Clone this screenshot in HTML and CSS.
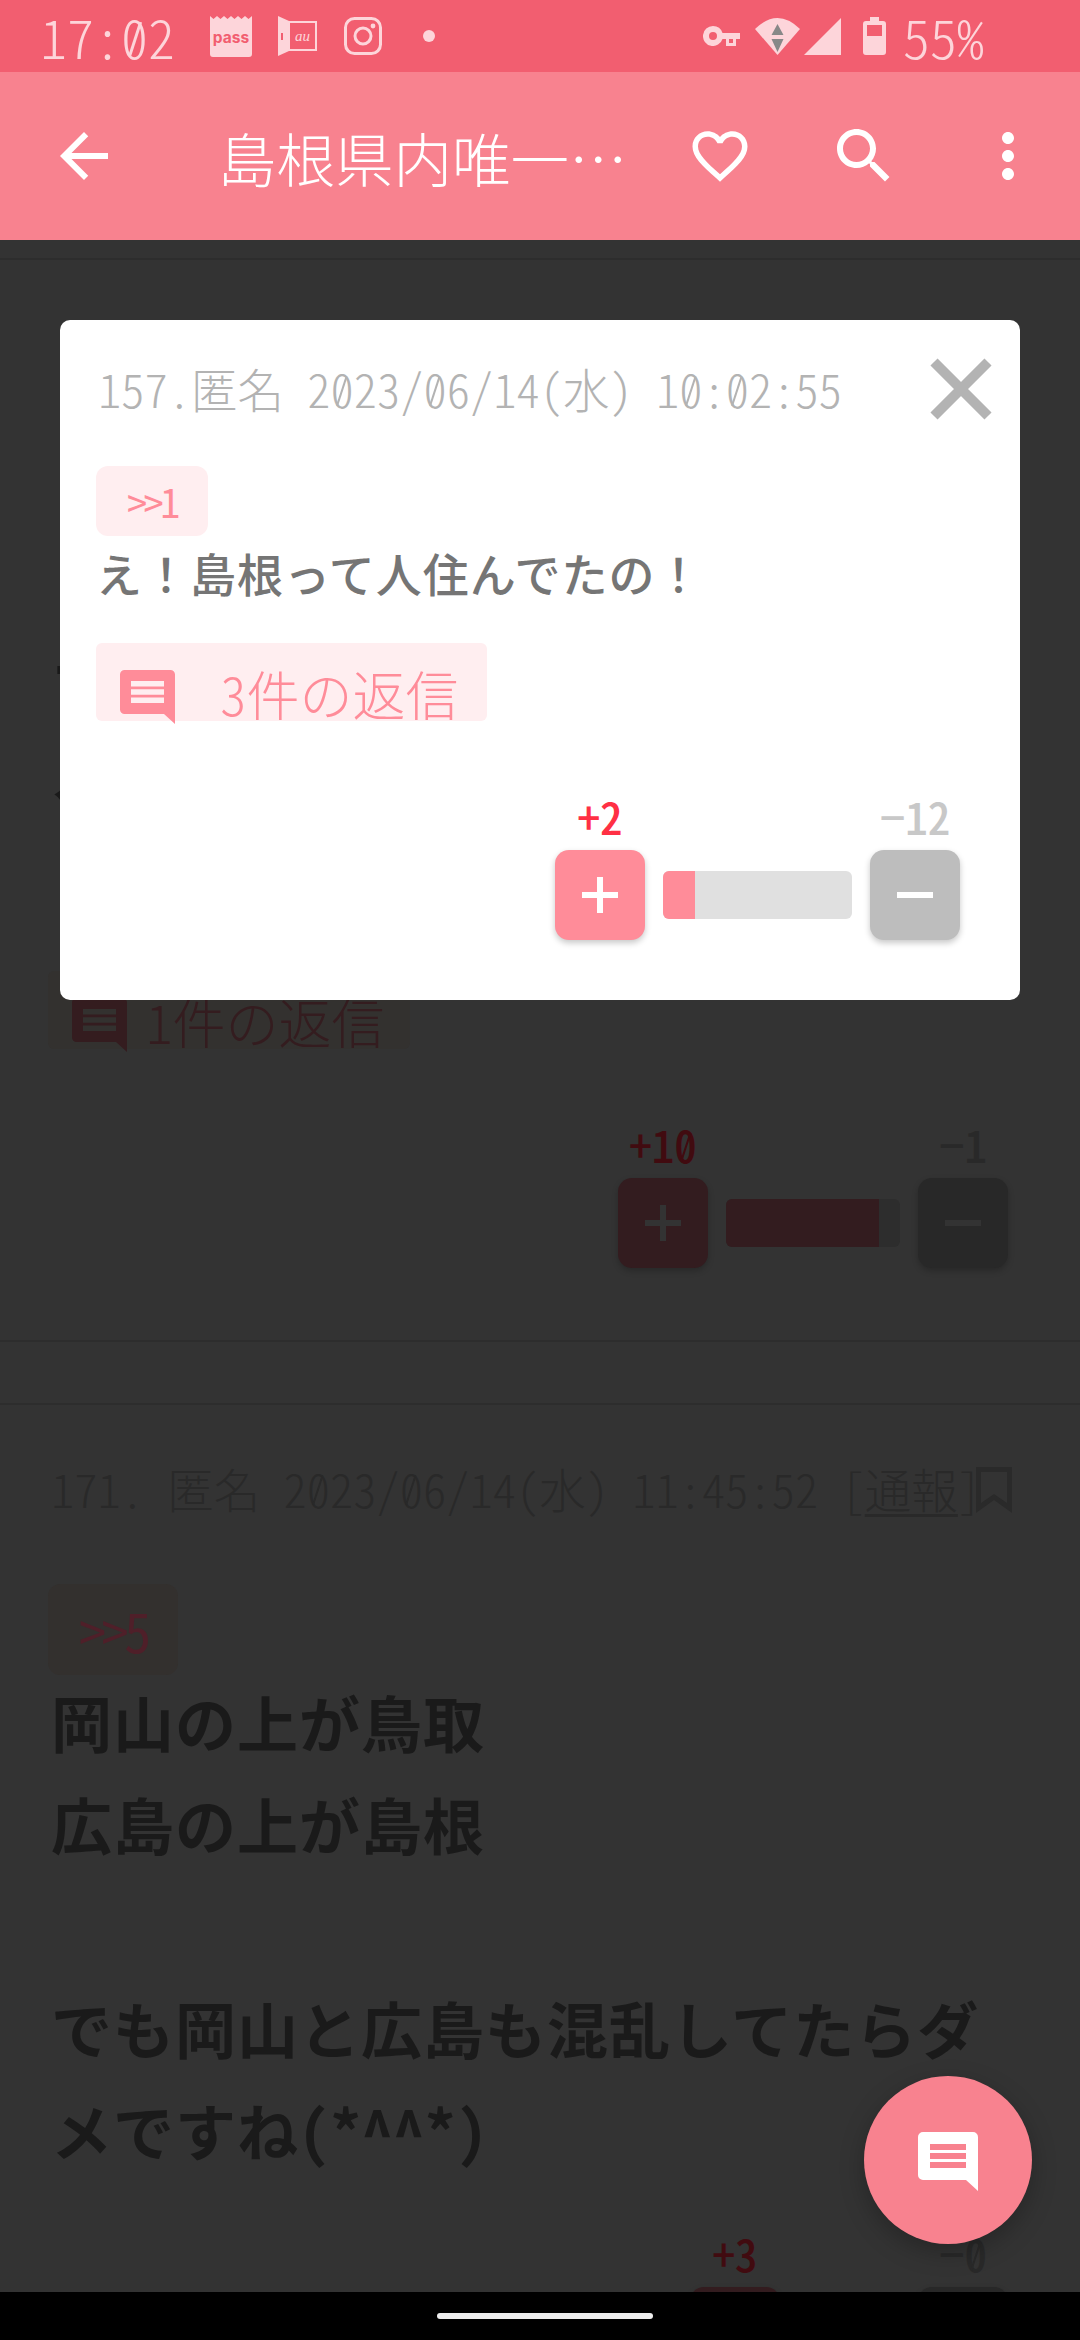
FILE: index.html
```html
<!DOCTYPE html>
<html lang="ja">
<head>
<meta charset="utf-8">
<title>島根県内唯一</title>
<link rel="stylesheet" href="styles.css">
</head>
<body>
<svg class="defs" width="0" height="0" aria-hidden="true">
  <symbol id="chat" viewBox="0 0 60 60">
    <path fill-rule="evenodd" d="M5 0H55a5 5 0 0 1 5 5V59L48 48H5a5 5 0 0 1-5-5V5a5 5 0 0 1 5-5ZM12 12v6H48v-6ZM12 21v6H48v-6ZM12 30v6H48v-6Z"/>
  </symbol>
  <symbol id="plus" viewBox="0 0 36 36"><path d="M15 0h6v15h15v6H21v15h-6V21H0v-6h15Z"/></symbol>
  <symbol id="minus" viewBox="0 0 36 36"><path d="M0 15h36v6H0Z"/></symbol>
</svg>
<div class="screen">
  <header class="status">
    <span class="time">17:<span class="z">0</span>2</span>
    <div class="st-left">
      <svg class="ic-pass" viewBox="0 0 42 41"><path d="M0 0l3.500 3L7 0l3.500 3L14 0l3.500 3L21 0l3.500 3L28 0l3.500 3L35 0l3.500 3L42 0V38a3 3 0 0 1-3 3H3a3 3 0 0 1-3-3Z"/><text x="21" y="27" text-anchor="middle">pass</text></svg>
      <svg class="ic-au" viewBox="0 0 39 40"><path class="solid" d="M0 0L11 5V35L0 40Z"/><rect class="out" x="11" y="6" width="27" height="28"/><rect class="cut" x="3" y="17" width="2" height="7"/><text x="24.500" y="25">au</text></svg>
      <svg class="ic-insta" viewBox="0 0 38 38"><rect x="1.500" y="1.500" width="35" height="35" rx="9"/><circle cx="19" cy="19" r="8"/><circle class="dot" cx="29" cy="9" r="2.400"/></svg>
      <span class="st-dot"></span>
    </div>
    <div class="st-right">
      <svg class="ic-key" viewBox="0 0 37 20"><path fill-rule="evenodd" d="M10 0a10 10 0 0 1 9.500 7H37V13H33V20H23V13H19.500A10 10 0 1 1 10 0ZM10 6a4 4 0 1 0 0 8a4 4 0 0 0 0-8Z"/><rect class="cut" x="26" y="13" width="4" height="4"/></svg>
      <svg class="ic-wifi" viewBox="0 0 45 37"><path d="M0 11Q22.500-11 45 11L22.500 37Z"/><path class="arrow" d="M22.500 6L28.500 17H16.500ZM16.500 21H28.500L22.500 34Z"/></svg>
      <svg class="ic-signal" viewBox="0 0 37 37"><path d="M37 0V37H0Z"/></svg>
      <svg class="ic-batt" viewBox="0 0 23 38"><path fill-rule="evenodd" d="M7 0H16V4H20a3 3 0 0 1 3 3V35a3 3 0 0 1-3 3H3a3 3 0 0 1-3-3V7a3 3 0 0 1 3-3H7ZM4 8V19H19V8Z"/></svg>
      <span class="batt-txt">55%</span>
    </div>
  </header>

  <nav class="appbar">
    <svg class="tool back" viewBox="0 0 24 24"><path d="M20 11H7.830l5.590-5.590L12 4l-8 8 8 8 1.410-1.410L7.830 13H20v-2z"/></svg>
    <h1 class="title">島根県内唯一…</h1>
    <svg class="tool heart" viewBox="0 0 24 24"><path d="M16.500 3c-1.740 0-3.410.81-4.500 2.090C10.910 3.810 9.240 3 7.500 3 4.420 3 2 5.420 2 8.500c0 3.780 3.400 6.860 8.550 11.540L12 21.350l1.450-1.320C18.600 15.360 22 12.280 22 8.500 22 5.420 19.580 3 16.500 3zm-4.400 15.550l-.1.100-.1-.1C7.140 14.240 4 11.390 4 8.500 4 6.500 5.500 5 7.500 5c1.540 0 3.040.99 3.570 2.360h1.870C13.460 5.990 14.960 5 16.500 5c2 0 3.500 1.500 3.500 3.500 0 2.890-3.140 5.740-7.900 10.050z"/></svg>
    <svg class="tool" viewBox="0 0 24 24"><path d="M15.500 14h-.79l-.28-.27C15.410 12.590 16 11.110 16 9.500 16 5.910 13.090 3 9.500 3S3 5.910 3 9.500 5.910 16 9.500 16c1.610 0 3.090-.59 4.230-1.570l.27.28v.79l5 4.990L20.490 19l-4.990-5zm-6 0C7.010 14 5 11.990 5 9.500S7.010 5 9.500 5 14 7.010 14 9.500 11.990 14 9.500 14z"/></svg>
    <svg class="tool" viewBox="0 0 24 24"><path d="M12 8c1.100 0 2-.9 2-2s-.9-2-2-2-2 .9-2 2 .9 2 2 2zm0 2c-1.100 0-2 .9-2 2s.9 2 2 2 2-.9 2-2-.9-2-2-2zm0 6c-1.100 0-2 .9-2 2s.9 2 2 2 2-.9 2-2-.9-2-2-2z"/></svg>
  </nav>

  <main class="content">
    <hr class="rule rule-top">
    <p class="body dim post1">一<br><span>人</span></p>
    <div class="reply dim-reply reply1">
      <svg class="reply-ic"><use href="#chat"/></svg>
      <span>1件の返信</span>
    </div>
    <div class="votes dim-votes votes1">
      <span class="lab lab-up">+1<span class="z">0</span></span><span></span><span class="lab lab-down">−1</span>
      <div class="btn up"><svg><use href="#plus"/></svg></div>
      <div class="bar" style="width:174px"><i style="width:88%"></i></div>
      <div class="btn down"><svg><use href="#minus"/></svg></div>
    </div>
    <hr class="rule rule-a">
    <hr class="rule rule-b">

    <div class="meta dim-meta">
      <span>171. 匿名 2<span class="z">0</span>23/<span class="z">0</span>6/14(水) 11:45:52 [<u>通報</u>]</span>
      <svg class="bookmark" viewBox="0 0 36 46"><path fill-rule="evenodd" d="M0 0H36V46L18 33L0 46ZM5 5V36L18 27L31 36V5Z"/></svg>
    </div>
    <div class="chip chip-big">&gt;&gt;5</div>
    <p class="body dim">岡山の上が鳥取<br>広島の上が島根<br><br>でも岡山と広島も混乱してたらダ<br>メですね(*^^*)</p>
    <div class="votes dim-votes votes2">
      <span class="lab lab-up">+3</span><span></span><span class="lab lab-down">−<span class="z">0</span></span>
      <div class="btn up"></div>
      <div class="bar" style="width:102px"><i style="width:100%"></i></div>
      <div class="btn down"></div>
    </div>

    <section class="modal">
      <div class="m-head">
        <span class="m-meta">157.匿名 2<span class="z">0</span>23/<span class="z">0</span>6/14(水) 1<span class="z">0</span>:<span class="z">0</span>2:55</span>
        <svg class="close" viewBox="0 0 62 62"><path d="M4 4L58 58M58 4L4 58"/></svg>
      </div>
      <div class="chip">&gt;&gt;1</div>
      <p class="m-text">え！島根って人住んでたの！</p>
      <div class="reply m-reply">
        <svg class="reply-ic"><use href="#chat"/></svg>
        <span>3件の返信</span>
      </div>
      <div class="votes">
        <span class="lab lab-up">+2</span><span></span><span class="lab lab-down">−12</span>
        <div class="btn up"><svg><use href="#plus"/></svg></div>
        <div class="bar" style="width:189px"><i style="width:16.7%"></i></div>
        <div class="btn down"><svg><use href="#minus"/></svg></div>
      </div>
    </section>

    <button class="fab"><svg><use href="#chat"/></svg></button>
  </main>

  <footer class="navbar"><span class="pill"></span></footer>
</div>
</body>
</html>
```
FILE: styles.css
```css
* { box-sizing: border-box; }
html, body { margin: 0; padding: 0; }
body {
  width: 1080px;
  height: 2340px;
  overflow: hidden;
  font-family: "Noto Sans CJK JP", "Noto Sans", sans-serif;
  font-feature-settings: "hwid";
  background: #333;
}
.defs { position: absolute; }
.screen { display: flex; flex-direction: column; height: 2340px; }

/* slashed zero: a thin stroke laid over the digit */
.z { position: relative; }
.z::after {
  content: "";
  position: absolute;
  left: 50%;
  top: 55%;
  width: .05em;
  height: .66em;
  background: currentColor;
  transform: translate(-50%, -50%) rotate(18deg);
}

/* status bar */
.status {
  height: 72px;
  flex: none;
  background: #f25e70;
  color: #fdd5da;
  display: flex;
  align-items: center;
  padding-left: 40px;
  position: relative;
  z-index: 2;
}
.status svg { display: block; fill: #fdd5da; }
.time { width: 170px; font-size: 54px; font-weight: 300; line-height: 72px; white-space: nowrap; }
.st-left { display: flex; align-items: center; }
.ic-pass { width: 42px; height: 41px; margin-right: 26px; }
.ic-pass text { font: 700 15.500px "Inter", sans-serif; fill: #f25e70; }
.ic-au { width: 39px; height: 40px; margin-right: 27px; }
.ic-au .out { fill: none; stroke: #fdd5da; stroke-width: 2; }
.ic-au .cut { fill: #f25e70; }
.ic-au text { font: italic 15px "Liberation Serif", serif; fill: #fdd5da; text-anchor: middle; }
.ic-insta { width: 38px; height: 38px; margin-right: 41px; }
.ic-insta rect, .ic-insta circle { fill: none; stroke: #fdd5da; stroke-width: 3; }
.ic-insta .dot { fill: #fdd5da; stroke: none; }
.st-dot { width: 12px; height: 12px; border-radius: 50%; background: #fdd5da; }
.st-right { margin-left: auto; display: flex; align-items: center; padding-right: 96px; }
.ic-key { width: 37px; height: 20px; margin-right: 15px; }
.ic-key .cut { fill: #f25e70; }
.ic-wifi { width: 45px; height: 37px; margin-right: 4px; }
.ic-wifi .arrow { fill: #888; }
.ic-signal { width: 37px; height: 37px; margin-right: 22px; }
.ic-batt { width: 23px; height: 38px; margin-right: 17px; }
.batt-txt { font-size: 54px; font-weight: 300; line-height: 72px; white-space: nowrap; }

/* app bar */
.appbar {
  height: 168px;
  flex: none;
  background: #f8828f;
  display: flex;
  align-items: center;
  padding-left: 48px;
  position: relative;
  z-index: 2;
}
.tool { width: 72px; height: 72px; fill: #fff; flex: none; }
.tool + .tool { margin-left: 72px; }
.title {
  margin: 0 46px 0 98px;
  width: 420px;
  font-size: 58.500px;
  font-weight: 300;
  color: #fff;
  white-space: nowrap;
  overflow: hidden;
}
.heart { width: 66px; height: 66px; margin: 0 3px; }

/* page behind the dialog */
.content { flex: 1; min-height: 0; position: relative; overflow: hidden; background: #333; }
.rule { border: 0; height: 2px; margin: 0; background: #2d2d2d; }
.rule-top { margin-top: 18px; }
.rule-a { margin-top: 72px; }
.rule-b { margin-top: 61px; }

.body { margin: 0 0 0 51px; font-size: 61px; line-height: 102px; letter-spacing: 1px; font-weight: 700; white-space: nowrap; }
.dim { color: #1a1a1a; }
.post1 { padding-top: 357px; margin: 0 0 150px 55px; }
.post1 span { margin-left: -2px; }

.reply { display: flex; align-items: flex-start; background: #ffeef0; border-radius: 6px; color: #ff8c99; font-size: 53px; font-weight: 300; line-height: 100px; }
.reply-ic { width: 55px; height: 55px; flex: none; fill: #ff8c99; margin: 27px 45px 0 24px; }
.reply span { white-space: nowrap; }
.dim-reply { background: #33312f; color: #341c1f; }
.dim-reply .reply-ic { fill: #341c1f; margin-right: 19px; }
.reply1 { width: 362px; height: 78px; margin-left: 48px; }

.votes { display: grid; grid-template-columns: 90px auto 90px; column-gap: 18px; row-gap: 9px; justify-content: end; justify-items: center; align-items: center; }
.lab { font-size: 45px; font-weight: 500; line-height: 50px; white-space: nowrap; }
.lab-up { color: #ff3044; }
.lab-down { color: #c8c8c8; }
.btn { width: 90px; height: 90px; border-radius: 14px; display: flex; align-items: center; justify-content: center; box-shadow: 0 3px 6px rgba(0,0,0,.22); }
.btn svg { width: 36px; height: 36px; fill: #fff; }
.up { background: #ff8c99; }
.down { background: #bdbdbd; }
.bar { height: 48px; border-radius: 6px; background: #e0e0e0; overflow: hidden; }
.bar i { display: block; height: 100%; background: #ff8c99; }
.dim-votes { padding-right: 72px; }
.dim-votes .lab-up { color: #410b10; }
.dim-votes .lab-down { color: #292929; }
.dim-votes .up { background: #331c1f; }
.dim-votes .down { background: #282828; }
.dim-votes .bar { background: #2d2d2d; }
.dim-votes .bar i { background: #331c1f; }
.dim-votes .btn svg { fill: #333; }
.votes1 { margin-top: 70px; }
.votes2 { margin-top: 47px; }

.meta { display: flex; align-items: center; margin: 52px 0 0 51px; height: 60px; font-size: 46.500px; font-weight: 300; color: #292929; white-space: nowrap; }
.meta u { text-decoration-thickness: 3px; text-underline-offset: 6px; }
.bookmark { width: 36px; height: 46px; flex: none; fill: #2a2a2a; margin: 6px 0 0 -5px; }

.chip { width: 112px; height: 70px; border-radius: 12px; background: #ffeef0; color: #ff8c99; display: flex; align-items: center; justify-content: center; font-size: 40px; font-weight: 400; letter-spacing: -3.500px; }
.chip-big { width: 130px; height: 91px; margin: 67px 0 -4px 48px; background: #33302e; color: #4f1f29; font-size: 54px; letter-spacing: -4.500px; }

/* dialog */
.modal { position: absolute; left: 60px; top: 80px; width: 960px; height: 680px; background: #fff; border-radius: 10px; padding: 0 60px 0 36px; }
.m-head { height: 146px; display: flex; align-items: flex-start; justify-content: space-between; margin-right: -32px; padding-top: 37px; }
.m-meta { font-size: 46.500px; font-weight: 300; color: #b3b3b3; line-height: 62px; margin-left: 2px; white-space: nowrap; }
.close { width: 62px; height: 62px; flex: none; fill: none; stroke: #b3b3b3; stroke-width: 10px; margin-top: 1px; }
.m-text { margin: 6px 0 0 0; font-size: 46px; letter-spacing: 1px; line-height: 60px; font-weight: 500; font-feature-settings: normal; color: #757575; white-space: nowrap; }
.m-reply { width: 391px; height: 78px; margin-top: 41px; }
.modal .votes { margin-top: 70px; }

/* floating button */
.fab { position: absolute; left: 864px; top: 1836px; width: 168px; height: 168px; border: 0; padding: 0; border-radius: 50%; background: #f8828f; display: flex; align-items: center; justify-content: center; box-shadow: 0 8px 24px rgba(0,0,0,.25); }
.fab svg { width: 60px; height: 60px; fill: #fff; margin-top: 4px; }

/* nav bar */
.navbar { height: 48px; flex: none; background: #000; display: flex; justify-content: center; padding: 21px 0 0 10px; position: relative; z-index: 2; }
.pill { width: 216px; height: 6px; border-radius: 3px; background: #eee; }
```
